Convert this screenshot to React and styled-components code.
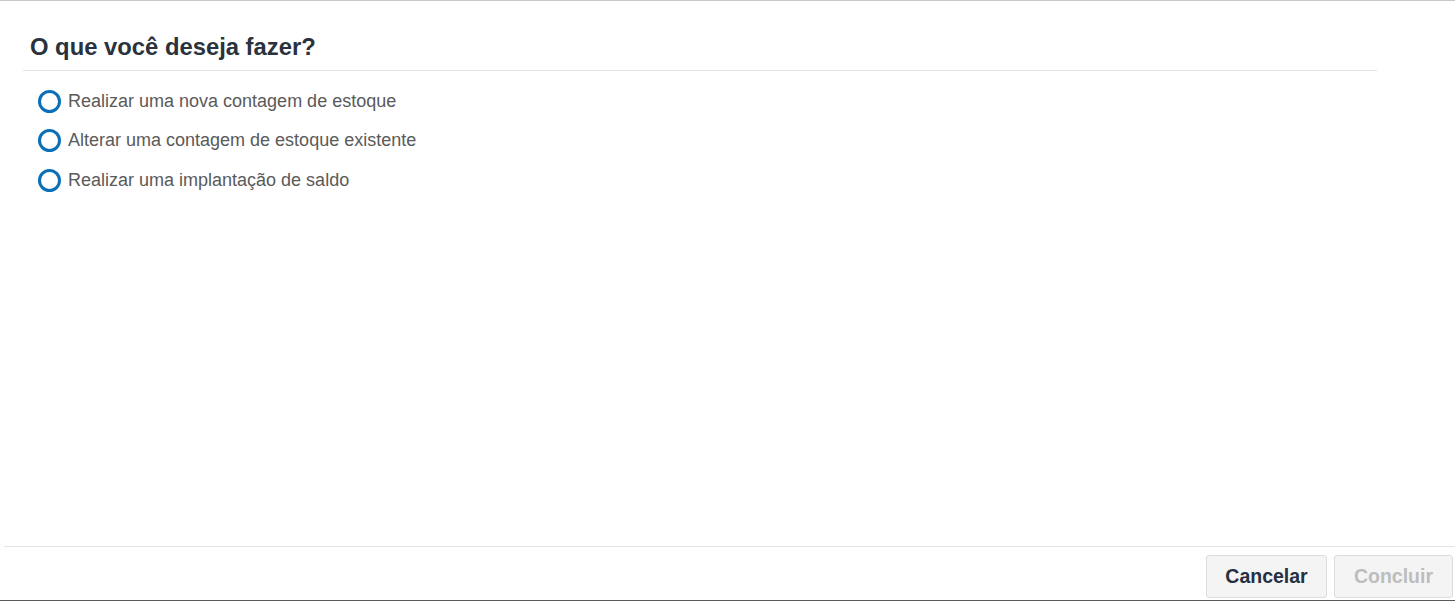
import React, { useState } from 'react';
import styled, { createGlobalStyle } from 'styled-components';

const GlobalStyle = createGlobalStyle`
    html, body {
        margin: 0;
        padding: 0;
        background: #fff;
        font-family: "Liberation Sans", Arial, sans-serif;
    }
`;

const Dialog = styled.div`
    height: 601px;
    box-sizing: border-box;
    display: flex;
    flex-direction: column;
    border-top: 1px solid #c8c8c8;
    border-bottom: 1px solid #5a5a5a;
    background: #fff;
`;

const Content = styled.div`
    flex: 1;
`;

const Header = styled.div`
    margin: 0 78px 0 23px;
    padding: 33px 7px 11px;
    border-bottom: 1px solid #e3e3e3;
`;

const Title = styled.h2`
    margin: 0;
    font-size: 23.8px;
    line-height: 25px;
    font-weight: bold;
    color: #29323d;
`;

const Options = styled.div`
    display: flex;
    flex-direction: column;
    padding: 10px 0 0 38px;
`;

const Option = styled.label`
    display: flex;
    align-items: center;
    gap: 7px;
    height: 40px;
    margin-top: ${props => (props.first ? '0' : '-0.5px')};
    cursor: pointer;
`;

const Radio = styled.span`
    box-sizing: border-box;
    width: 23px;
    height: 23px;
    border-radius: 50%;
    border: 3px solid #0b6fb8;
    display: flex;
    align-items: center;
    justify-content: center;

    &::after {
        content: '';
        width: 9px;
        height: 9px;
        border-radius: 50%;
        background: ${props => (props.checked ? '#0b6fb8' : 'transparent')};
    }
`;

const OptionText = styled.span`
    font-size: 18px;
    color: #5a5a5a;
`;

const Footer = styled.div`
    box-sizing: border-box;
    margin-left: 4px;
    height: 54px;
    border-top: 1px solid #e3e3e3;
    display: flex;
    justify-content: flex-end;
    align-items: flex-start;
    gap: 7px;
    padding: 8px 2px 0 0;
    background: #fff;
`;

const Button = styled.button`
    box-sizing: border-box;
    height: 43px;
    width: ${props => props.width}px;
    border: 1px solid #dcdcdc;
    border-radius: 3px;
    background: #f4f4f4;
    font-family: "Liberation Sans", Arial, sans-serif;
    font-size: 19.5px;
    font-weight: bold;
    color: ${props => (props.disabled ? '#bdbdbd' : '#253041')};
    cursor: ${props => (props.disabled ? 'default' : 'pointer')};
`;

const options = [
    'Realizar uma nova contagem de estoque',
    'Alterar uma contagem de estoque existente',
    'Realizar uma implantação de saldo',
];

const App = () => {
    const [selected, setSelected] = useState(null);

    return (
        <Dialog>
            <GlobalStyle />
            <Content>
                <Header>
                    <Title>O que você deseja fazer?</Title>
                </Header>
                <Options>
                    {options.map((text, i) => (
                        <Option key={text} first={i === 0} onClick={() => setSelected(i)}>
                            <Radio checked={selected === i} />
                            <OptionText>{text}</OptionText>
                        </Option>
                    ))}
                </Options>
            </Content>
            <Footer>
                <Button width={121}>Cancelar</Button>
                <Button width={119} disabled={selected === null}>Concluir</Button>
            </Footer>
        </Dialog>
    );
};

export default App;
